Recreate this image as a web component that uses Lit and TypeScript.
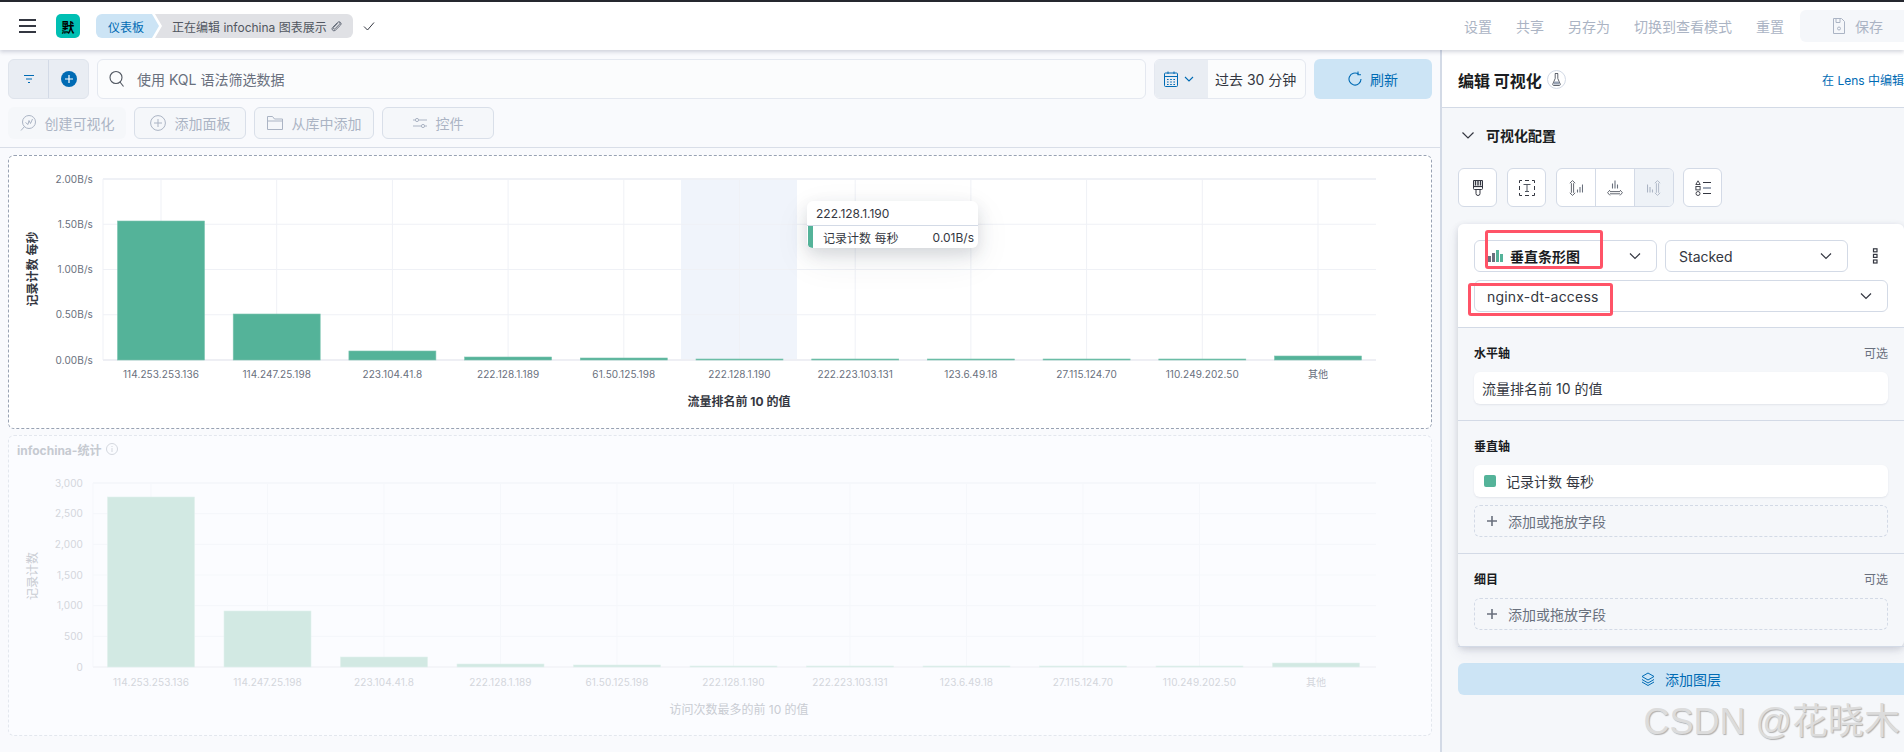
import { LitElement, html, css, svg } from "lit";
import { customElement } from "lit/decorators.js";

const IPS = ["114.253.253.136","114.247.25.198","223.104.41.8","222.128.1.189","61.50.125.198","222.128.1.190","222.223.103.131","123.6.49.18","27.115.124.70","110.249.202.50","其他"];

type ChartCfg = {
  view: string; w: number; h: number; left: number; right: number; top: number; bottom: number;
  ticks: string[]; tickCol: string; first: number; step: number; tops: number[]; barFill: string; barEdge: string;
  grid: string; text: string; labelY: number; xTitle: string; xTitleY: number; xTitleFill: string; xTitleWeight: number;
  yTitle: string; yTitleCy: number; yTitleFill: string; labelX: number; highlight?: boolean; edge: string;
};

function chart(c: ChartCfg) {
  const n = c.ticks.length - 1;
  const dy = (c.bottom - c.top) / n;
  const hw = 43.5;
  return html`<svg class="chart" width=${c.w} height=${c.h} viewBox=${c.view}>
    ${c.highlight ? svg`<rect x="681" y=${c.top} width="116" height=${c.bottom - c.top} fill="#f0f4fb"></rect>` : ""}
    ${c.ticks.map((_, i) => svg`<line x1=${c.left} x2=${c.right} y1=${c.top + i * dy} y2=${c.top + i * dy} stroke=${c.grid} stroke-width=${i === 0 ? 2 : 1.2}></line>`)}
    <line x1=${c.left} x2=${c.left} y1=${c.top} y2=${c.bottom} stroke=${c.grid}></line>
    ${IPS.map((_, i) => svg`<line x1=${c.first + i * c.step} x2=${c.first + i * c.step} y1=${c.top} y2=${c.bottom} stroke=${c.grid}></line>`)}
    <line x1=${c.left} x2=${c.right} y1=${c.bottom} y2=${c.bottom} stroke=${c.edge} stroke-width="2"></line>
    ${c.tops.map((t, i) => svg`<rect x=${c.first + i * c.step - hw} y=${t} width=${hw * 2} height=${c.bottom - t} fill=${c.barFill} stroke=${c.barEdge} stroke-width="0.6"></rect>`)}
    ${c.ticks.map((t, i) => svg`<text x=${c.labelX} y=${c.top + i * dy + 3.5} text-anchor="end" class="tick" fill=${c.tickCol}>${t}</text>`)}
    ${IPS.map((t, i) => svg`<text x=${c.first + i * c.step} y=${c.labelY} text-anchor="middle" class="tick" fill=${c.text}>${t}</text>`)}
    <text x="739" y=${c.xTitleY} text-anchor="middle" class="axt" font-weight=${c.xTitleWeight} fill=${c.xTitleFill}>${c.xTitle}</text>
    <text x="32" y=${c.yTitleCy} text-anchor="middle" dominant-baseline="central" transform="rotate(-90 32 ${c.yTitleCy})" class="axt" font-weight=${c.xTitleWeight} fill=${c.yTitleFill}>${c.yTitle}</text>
  </svg>`;
}

const chev = html`<svg class="chev" width="14" height="14" viewBox="0 0 14 14" fill="none" stroke="#343741" stroke-width="1.2"><path d="M2 4.5 7 9.5 12 4.5"/></svg>`;
const plus = html`<svg width="12" height="12" viewBox="0 0 12 12" stroke="#69707d" stroke-width="1.6"><path d="M6 1v10M1 6h10"/></svg>`;

@customElement("app-root")
export class AppRoot extends LitElement {
  static styles = css`
    :host { display: block; width: 1904px; height: 752px; overflow: hidden; position: relative; background: #f9fafd;
      font-family: Inter, "Noto Sans CJK SC", sans-serif; font-size: 14px; color: #343741; }
    * { box-sizing: border-box; }
    svg { display: block; flex: none; }
    .top { height: 50px; border-top: 2px solid #25282f; background: #fff; box-shadow: 0 2px 4px rgba(60,70,100,.22);
      display: flex; align-items: center; position: relative; z-index: 2; }
    .menu { margin-left: 19px; width: 17px; height: 14px; border-top: 2px solid #343741; border-bottom: 2px solid #343741; position: relative; }
    .menu::after { content: ""; position: absolute; left: 0; right: 0; top: 4px; height: 2px; background: #343741; }
    .logo { margin-left: 20px; width: 24px; height: 24px; border-radius: 5px; background: #00bfb3; color: #000; font-size: 13px; font-weight: 700;
      display: flex; align-items: center; justify-content: center; }
    .crumbs { margin-left: 16px; display: flex; height: 24px; font-size: 12px; }
    .c1 { width: 63px; padding-left: 12px; background: #cce4f5; color: #006bb4; border-radius: 6px 0 0 6px; display: flex; align-items: center;
      clip-path: polygon(0 0, 56px 0, 100% 50%, 56px 100%, 0 100%); }
    .c2 { width: 198px; margin-left: -4px; padding-left: 17px; background: #e0e1e5; color: #515761; border-radius: 0 6px 6px 0; display: flex; align-items: center; gap: 3px;
      clip-path: polygon(0 0, 100% 0, 100% 100%, 0 100%, 7px 50%); white-space: nowrap; }
    .check { margin-left: 9px; }
    .links { margin-left: auto; display: flex; align-items: center; gap: 24px; color: #abb4c4; }
    .save { margin-left: 16px; width: 104px; height: 32px; background: #f5f7fa; border-radius: 6px 0 0 6px; display: flex; align-items: center; gap: 9px; padding-left: 32px; color: #abb4c4; }
    .main { display: grid; grid-template-columns: 1440px 464px; height: 702px; }
    .left { display: flex; flex-direction: column; min-width: 0; }
    .filters { display: flex; padding: 9px 8px 0; gap: 8px; height: 49px; }
    .fgroup { width: 81px; display: flex; background: #e9edf3; border: 1px solid #dfe4ec; border-radius: 6px; }
    .fgroup > div { flex: 1; display: flex; align-items: center; justify-content: center; }
    .fgroup > div + div { border-left: 1px solid #d3dae6; }
    .search { flex: 1; background: #fbfcfd; border: 1px solid #e4e8f0; border-radius: 6px; display: flex; align-items: center; gap: 12px; padding-left: 11px; color: #69707d; }
    .date { width: 152px; display: flex; border: 1px solid #e4e8f0; border-radius: 6px; overflow: hidden; background: #fbfcfd; }
    .date .dl { width: 53px; background: #e9edf3; display: flex; align-items: center; gap: 6px; padding-left: 9px; }
    .date .dr { flex: 1; display: flex; align-items: center; padding-left: 7px; white-space: nowrap; }
    .refresh { width: 118px; background: #cce4f5; color: #006bb4; border-radius: 6px; display: flex; align-items: center; justify-content: center; gap: 8px; }
    .actions { display: flex; gap: 8px; padding: 8px 8px 0; height: 40px; color: #abb4c4; }
    .act { height: 32px; background: #f5f7fa; border: 1px solid #d9dfe9; border-radius: 6px; display: flex; align-items: center; justify-content: center; gap: 9px; white-space: nowrap; }
    .act.plain { border-color: transparent; }
    .act.w118 { width: 118px; }
    .act.w112 { width: 112px; }
    .act.w120 { width: 120px; }
    .rule { margin-top: 8px; border-top: 1px solid #d9dee8; height: 8px; flex: none; }
    .panel { position: relative; margin: 0 8px; height: 274px; background: #fff; border: 1px dashed #98a2b3; border-radius: 6px; flex: none; }
    .panel.dim { margin-top: 6px; height: 301px; background: #fbfcff; border-color: #e3e7ee; }
    .ptitle { height: 26px; display: flex; align-items: center; gap: 5px; padding-left: 8px; font-size: 12px; font-weight: 700; color: #c6cad1; }
    .chart .tick { font-size: 10px; letter-spacing: .1px; }
    .chart .axt { font-size: 12px; }
    .tip { position: absolute; left: 798px; top: 45px; width: 171px; height: 47px; background: #fff; border-radius: 6px; font-size: 12px;
      box-shadow: 0 6px 16px rgba(50,60,80,.16), 0 12px 36px rgba(50,60,80,.08); overflow: hidden; }
    .tip .th { height: 25px; border-bottom: 1px solid #d3dae6; padding-left: 9px; display: flex; align-items: center; }
    .tip .trow { height: 22px; margin-left: 1px; border-left: 5px solid #54b399; display: flex; align-items: center; justify-content: space-between; padding: 0 4px 0 10px; white-space: nowrap; }
    .right { border-left: 2px solid #d3dae6; background: #f5f7fa; display: flex; flex-direction: column; z-index: 1; min-width: 0; }
    .rhead { height: 58px; flex: none; background: #fff; border-bottom: 1px solid #d3dae6; display: flex; align-items: center; padding: 2px 0 0 16px; }
    .rhead h2 { margin: 0; font-size: 16px; font-weight: 700; color: #1a1c21; white-space: nowrap; }
    .beaker { margin-left: 5px; width: 19px; height: 19px; border: 1px solid #d3dae6; border-radius: 50%; display: flex; align-items: center; justify-content: center; }
    .lens { margin-left: auto; font-size: 12px; color: #006bb4; white-space: nowrap; }
    .cfg { height: 60px; flex: none; display: flex; align-items: center; gap: 11px; padding: 0 0 6px 19px; font-weight: 700; color: #1a1c21; }
    .tools { display: flex; gap: 10px; padding-left: 16px; height: 39px; flex: none; }
    .tbtn { width: 39px; background: #fff; border: 1px solid #d3dae6; border-radius: 6px; display: flex; align-items: center; justify-content: center; }
    .tgroup { display: flex; width: 118px; background: #fff; border: 1px solid #d3dae6; border-radius: 6px; overflow: hidden; margin-right: -1px; }
    .tgroup > div { flex: 1; display: flex; align-items: center; justify-content: center; }
    .tgroup > div + div { border-left: 1px solid #d3dae6; }
    .tgroup > .off { background: #eef2f7; }
    .card { position: relative; margin: 17px 0 0 16px; border-radius: 6px; background: #f5f7fa; box-shadow: 0 2px 6px rgba(60,70,100,.18), 0 6px 14px rgba(60,70,100,.08); flex: none; }
    .chead { background: #fff; padding: 16px 16px 15px; border-bottom: 1px solid #d3dae6; border-radius: 6px 6px 0 0; display: flex; flex-direction: column; gap: 8px; }
    .srow { display: flex; align-items: center; gap: 8px; }
    .sel { height: 32px; width: 183px; background: #fff; border: 1px solid #d3dae6; border-radius: 6px; display: flex; align-items: center; padding: 0 14px 0 13px; justify-content: space-between; }
    .sel.wide { width: 100%; letter-spacing: .2px; padding-left: 12px; }
    .sel b { font-weight: 700; display: flex; align-items: center; gap: 7px; color: #1a1c21; white-space: nowrap; }
    .dots { margin-left: 16px; width: 8px; }
    .sec { padding: 16px; border-bottom: 1px solid #d3dae6; display: flex; flex-direction: column; }
    .sec:last-of-type { border-bottom: 0; }
    .lab { height: 16px; margin-bottom: 12px; display: flex; align-items: center; justify-content: space-between; font-size: 12px; font-weight: 700; color: #1a1c21; }
    .lab span { font-weight: 400; color: #69707d; }
    .field { height: 32px; background: #fff; border-radius: 6px; box-shadow: 0 1px 2px rgba(60,70,100,.1); display: flex; align-items: center; padding-left: 8px; gap: 10px; }
    .sw { width: 12px; height: 12px; border-radius: 2px; background: #54b399; margin-left: 2px; }
    .add { height: 32px; margin-top: 8px; border: 1px dashed #d3dae6; border-radius: 6px; display: flex; align-items: center; padding-left: 11px; gap: 10px; color: #69707d; }
    .add.first { margin-top: 0; }
    .redbox { position: absolute; border: 3px solid #ff5367; border-radius: 3px; }
    .r1 { left: 27px; top: 6px; width: 118px; height: 39px; }
    .r2 { left: 10px; top: 59px; width: 145px; height: 33px; }
    .layer { margin: 16px 0 0 16px; height: 32px; flex: none; background: #cce4f5; color: #006bb4; border-radius: 6px 0 0 6px; display: flex; align-items: center; justify-content: center; gap: 10px; }
    .wm { position: absolute; right: 4px; bottom: 8px; font-size: 36px; line-height: 44px; color: #dcdcdc; white-space: nowrap; z-index: 3;
      font-family: "Liberation Sans", "Noto Sans CJK SC", sans-serif; text-shadow: 1px 1px 1px #b0b0b0; }
  `;

  render() {
    return html`
      <div class="top">
        <div class="menu"></div>
        <div class="logo">默</div>
        <div class="crumbs">
          <div class="c1">仪表板</div>
          <div class="c2">正在编辑 infochina 图表展示
            <svg width="12" height="12" viewBox="0 0 12 12" fill="none" stroke="#69707d"><path d="M9.500 2.200a1.300 1.300 0 0 1 0 2L5 8.800a1 1 0 0 1-1.500-1.400L7.600 3.200M2.500 7.500 7.600 2.400a2 2 0 0 1 2.900 2.800L5.200 10.400a2 2 0 0 1-2.800-2.800"/></svg>
          </div>
        </div>
        <svg class="check" width="14" height="14" viewBox="0 0 14 14" fill="none" stroke="#343741" stroke-width="1"><path d="M2 7.500 5.500 11 12 3.500"/></svg>
        <div class="links">
          <span>设置</span><span>共享</span><span>另存为</span><span>切换到查看模式</span><span>重置</span>
        </div>
        <div class="save">
          <svg width="14" height="16" viewBox="0 0 14 16" fill="none" stroke="#abb4c4"><path d="M1.500.5h8l3 3v12h-11z"/><path d="M4 .5v4h4v-4"/><circle cx="7" cy="10.500" r="1.500"/></svg>
          <span>保存</span>
        </div>
      </div>
      <div class="main">
        <div class="left">
          <div class="filters">
            <div class="fgroup">
              <div><svg width="12" height="10" viewBox="0 0 12 10" stroke="#006bb4" stroke-width="1.200"><path d="M1 1.500h10M3 5h6M5 8.500h2"/></svg></div>
              <div><svg width="16" height="16" viewBox="0 0 16 16"><circle cx="8" cy="8" r="8" fill="#006bb4"/><path d="M8 4v8M4 8h8" stroke="#fff" stroke-width="1.200"/></svg></div>
            </div>
            <div class="search">
              <svg width="16" height="18" viewBox="0 0 16 18" fill="none" stroke="#515761" stroke-width="1.100"><circle cx="7" cy="7.500" r="6"/><path d="M11 12l3.500 4.500"/></svg>
              <span>使用 KQL 语法筛选数据</span>
            </div>
            <div class="date">
              <div class="dl">
                <svg width="14" height="16" viewBox="0 0 14 16" fill="none" stroke="#006bb4"><rect x=".5" y="2" width="13" height="13.500" rx="1"/><path d="M.5 5.500h13M4 .5v2.500M10 .5v2.500"/><path d="M3 8.500h8M3 11h8M3 13.500h8" stroke-dasharray="1.600 1.600"/></svg>
                <svg width="10" height="10" viewBox="0 0 10 10" fill="none" stroke="#006bb4" stroke-width="1.100"><path d="M1 3l4 4 4-4"/></svg>
              </div>
              <div class="dr">过去 30 分钟</div>
            </div>
            <div class="refresh">
              <svg width="14" height="16" viewBox="0 0 14 16" fill="none" stroke="#006bb4" stroke-width="1.100"><path d="M10.500 3.200A6 6 0 1 0 13 8"/><path d="M10 .5v3.200h3"/></svg>
              <span>刷新</span>
            </div>
          </div>
          <div class="actions">
            <div class="act plain w118">
              <svg width="16" height="16" viewBox="0 0 16 16" fill="none" stroke="#abb4c4"><circle cx="9" cy="7" r="6.500"/><path d="M5.500 7.500 8 9.500l1-4 1.500 3 2-4.500M4.500 11.500 1 15.500"/></svg><span>创建可视化</span>
            </div>
            <div class="act w112">
              <svg width="16" height="16" viewBox="0 0 16 16" fill="none" stroke="#abb4c4"><circle cx="8" cy="8" r="7.400"/><path d="M8 4v8M4 8h8"/></svg><span>添加面板</span>
            </div>
            <div class="act w120">
              <svg width="16" height="14" viewBox="0 0 16 14" fill="none" stroke="#abb4c4"><path d="M.5 13.500V.5h5l2 2.500h8v10.500zM.5 5h15"/></svg><span>从库中添加</span>
            </div>
            <div class="act w112">
              <svg width="14" height="12" viewBox="0 0 14 12" fill="none" stroke="#abb4c4"><circle cx="4" cy="3" r="1.600"/><circle cx="10" cy="9" r="1.600"/><path d="M6 3h8M0 3h2M0 9h8M12 9h2"/></svg><span>控件</span>
            </div>
          </div>
          <div class="rule"></div>
          <div class="panel">
            ${chart({
              view: "9 156 1422 272", w: 1422, h: 272, left: 103, right: 1376, top: 179, bottom: 360,
              ticks: ["2.00B/s","1.50B/s","1.00B/s","0.50B/s","0.00B/s"], tickCol: "#69707d", first: 161, step: 115.7,
              tops: [221,314,351,357,358,359,359,359,359,359,356], barFill: "#54b399", barEdge: "#7cc4b0", grid: "#eff1f6", edge: "#eeeff4",
              text: "#69707d", labelY: 378, labelX: 93, xTitle: "流量排名前 10 的值", xTitleY: 406, xTitleFill: "#343741", xTitleWeight: 700,
              yTitle: "记录计数 每秒", yTitleCy: 269, yTitleFill: "#343741", highlight: true,
            })}
            <div class="tip">
              <div class="th">222.128.1.190</div>
              <div class="trow"><span>记录计数 每秒</span><span>0.01B/s</span></div>
            </div>
          </div>
          <div class="panel dim">
            <div class="ptitle">infochina-统计
              <svg width="12" height="12" viewBox="0 0 12 12" fill="none" stroke="#d3d7de"><circle cx="6" cy="6" r="5.500"/><path d="M6 5v4M6 3v1"/></svg>
            </div>
            ${chart({
              view: "9 462 1422 273", w: 1422, h: 273, left: 93, right: 1376, top: 483, bottom: 667,
              ticks: ["3,000","2,500","2,000","1,500","1,000","500","0"], tickCol: "#d3d6dc", first: 151, step: 116.5,
              tops: [497,611,657,664,665,666,666,666,666,666,663], barFill: "#d2e9e3", barEdge: "#e2f1ed", grid: "#f5f7fb", edge: "#f4f5f9",
              text: "#d3d6dc", labelY: 686, labelX: 83, xTitle: "访问次数最多的前 10 的值", xTitleY: 714, xTitleFill: "#c9ccd3", xTitleWeight: 400,
              yTitle: "记录计数", yTitleCy: 576, yTitleFill: "#c9ccd3",
            })}
          </div>
        </div>
        <div class="right">
          <div class="rhead">
            <h2>编辑 可视化</h2>
            <div class="beaker"><svg width="9" height="13" viewBox="0 0 9 13" fill="none" stroke="#515761" stroke-width=".9"><path d="M3 .5h3M3.200.5v5L.8 11a1 1 0 0 0 .9 1.500h5.600a1 1 0 0 0 .9-1.500L5.800 5.500v-5"/><path d="M2.200 8.500h4.600l.9 3H1.300z" fill="#98a2b3" stroke="none"/></svg></div>
            <span class="lens">在 Lens 中编辑</span>
          </div>
          <div class="cfg">
            <svg width="14" height="14" viewBox="0 0 14 14" fill="none" stroke="#343741" stroke-width="1.200"><path d="M1.500 4.500 7 10l5.500-5.500"/></svg>
            <span>可视化配置</span>
          </div>
          <div class="tools">
            <div class="tbtn"><svg width="10" height="16" viewBox="0 0 10 16" fill="none" stroke="#343741"><path d="M.5.5h9v8a1 1 0 0 1-1 1h-7a1 1 0 0 1-1-1z"/><path d="M3 9.500v4a2 2 0 0 0 4 0v-4"/><path d="M2.500.5v5M5 .5v5M7.500.5v5" stroke-width="1.400"/><path d="M.5 6.500h9" stroke-width="1.200"/></svg></div>
            <div class="tbtn"><svg width="16" height="16" viewBox="0 0 16 16" fill="none" stroke="#343741"><path d="M.5 3V.5H3M6 .5h4M13 .5h2.500V3M.5 6v4M15.500 6v4M.5 13v2.500H3M6 15.500h4M13 15.500h2.500V13"/><path d="M4.500 4.500h7M8 4.500v7M6 11.500h4" stroke="#515761"/></svg></div>
            <div class="tgroup">
              <div><svg width="14" height="16" viewBox="0 0 14 16" fill="none" stroke="#515761" stroke-width=".9"><path d="M.8 3.200 3.500.6l2.700 2.600M.8 12.800l2.700 2.600 2.700-2.600M2.400 3.200v9.600M4.600 3.200v9.600"/><path d="M8.500 12.500v-3M11 12.500V7M13.500 12.500V4.500" stroke="#69707d" stroke-width="1.100"/></svg></div>
              <div><svg width="16" height="16" viewBox="0 0 16 16" fill="none" stroke="#515761" stroke-width=".9"><path d="M3 10 .6 12.700 3 15.400M13 10l2.400 2.700-2.400 2.700M3 11.600h10M3 13.800h10"/><path d="M5.500 8.500v-5M8 8.500V.5M10.500 8.500v-4" stroke="#69707d" stroke-width="1.100"/></svg></div>
              <div class="off"><svg width="14" height="16" viewBox="0 0 14 16" fill="none" stroke="#abb4c4" stroke-width=".9"><path d="M7.800 3.200 10.500.6l2.700 2.600M7.800 12.800l2.700 2.600 2.700-2.600M9.400 3.200v9.600M11.600 3.200v9.600"/><path d="M.5 12.500v-8M3 12.500v-5.500M5.500 12.500v-3" stroke-width="1.100"/></svg></div>
            </div>
            <div class="tbtn"><svg width="16" height="16" viewBox="0 0 16 16" fill="none" stroke="#343741" stroke-width=".9"><path d="M3 .8 5.200 4.500H.8z"/><rect x=".9" y="6.500" width="4.200" height="3.400"/><circle cx="3" cy="13.500" r="2"/><path d="M8 2.500h8M8 13.500h8" stroke-width="1.200"/><path d="M8 8h8" stroke="#98a2b3" stroke-width="1.800"/></svg></div>
          </div>
          <div class="card">
            <div class="chead">
              <div class="srow">
                <div class="sel"><b><svg width="15" height="12" viewBox="0 0 15 12"><rect x="0" y="6" width="3" height="6" fill="#69707d"/><rect x="4" y="3" width="3" height="9" fill="#69707d"/><rect x="8" y="0" width="3" height="12" fill="#54b399"/><rect x="12" y="4" width="3" height="8" fill="#54b399"/></svg>垂直条形图</b>${chev}</div>
                <div class="sel">Stacked${chev}</div>
                <div class="dots"><svg width="8" height="16" viewBox="0 0 8 16" fill="none" stroke="#343741" stroke-width="1.200"><rect x="1.500" y=".8" width="3.500" height="3"/><rect x="1.500" y="6.400" width="3.500" height="3"/><rect x="1.500" y="12" width="3.500" height="3"/></svg></div>
              </div>
              <div class="sel wide">nginx-dt-access${chev}</div>
            </div>
            <div class="sec">
              <div class="lab">水平轴<span>可选</span></div>
              <div class="field">流量排名前 10 的值</div>
            </div>
            <div class="sec">
              <div class="lab">垂直轴</div>
              <div class="field"><div class="sw"></div>记录计数 每秒</div>
              <div class="add">${plus}添加或拖放字段</div>
            </div>
            <div class="sec">
              <div class="lab">细目<span>可选</span></div>
              <div class="add first">${plus}添加或拖放字段</div>
            </div>
            <div class="redbox r1"></div>
            <div class="redbox r2"></div>
          </div>
          <div class="layer">
            <svg width="14" height="14" viewBox="0 0 14 14" fill="none" stroke="#006bb4"><path d="M7 1 1 4.500 7 8l6-3.500zM1 7.500 7 11l6-3.500M1 10l6 3.500L13 10"/></svg>
            <span>添加图层</span>
          </div>
        </div>
      </div>
      <div class="wm">CSDN @花晓木</div>
    `;
  }
}
